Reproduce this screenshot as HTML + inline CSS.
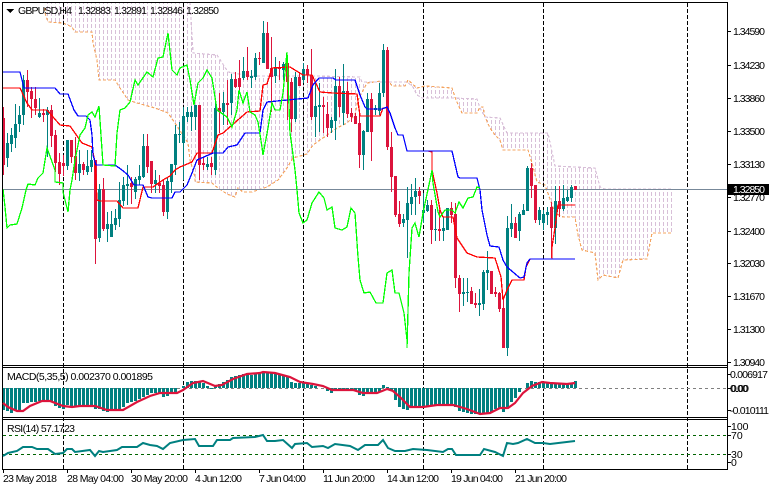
<!DOCTYPE html>
<html><head><meta charset="utf-8"><title>GBPUSD,H4</title>
<style>
html,body{margin:0;padding:0;background:#fff;width:769px;height:490px;overflow:hidden}
svg{display:block}
text{font-family:"Liberation Sans",sans-serif;font-size:10.5px;fill:#000}
</style></head><body>
<svg width="769" height="490" viewBox="0 0 769 490" xmlns="http://www.w3.org/2000/svg">
<defs>
<pattern id="h" width="4" height="6" patternUnits="userSpaceOnUse"><rect x="3" y="0" width="1" height="4" fill="#D8BFD8"/></pattern>
<clipPath id="cp"><rect x="3" y="3" width="724" height="362"/></clipPath>
</defs>
<rect width="769" height="490" fill="#fff"/>
<g shape-rendering="crispEdges">
<!-- cloud -->
<g clip-path="url(#cp)">
<polygon fill="url(#h)" points="45,2 190,2 193,53 217,55 228,72 250,76 313,76 360,77 362,82 407,82 413,87 417,95 422,98 453,98 477,99 480,108 485,117 500,118 507,133 548,133 552,152 555,166 595,168 600,187 605,189 672,189 672,233 652,233 647,259 623,260 618,278 603,275 598,280 595,253 582,250 578,235 575,217 563,217 555,213 545,185 537,182 532,163 528,150 503,150 500,140 495,135 490,128 485,117 483,107 480,107 477,113 462,113 456,100 452,88 425,86 417,88 408,80 405,86 392,86 388,80 367,83 358,100 355,115 347,123 337,128 313,145 307,154 293,158 287,168 278,180 267,187 250,191 243,192 238,188 235,197 227,194 218,188 212,183 195,182 195,177 190,160 188,143 175,123 168,113 155,108 137,103 128,100 120,88 115,80 99,80 97,60 93,43 92,32 75,32 72,27 63,23 48,22 45,13"/>
<polyline fill="none" stroke="#F4A460" stroke-width="1.2" stroke-dasharray="3 2" points="45,8 45,13 48,22 63,23 72,27 75,32 92,32 93,43 97,60 99,80 115,80 120,88 128,100 137,103 155,108 168,113 175,123 188,143 190,160 195,177 195,182 212,183 218,188 227,194 235,197 238,188 243,192 252,192 267,187 278,180 287,168 293,158 307,154 313,145 337,128 347,123 355,115 358,100 367,83 388,80 392,86 405,86 408,80 417,88 425,86 452,88 456,100 462,113 477,113 480,107 483,107 485,117 490,128 495,135 500,140 503,150 528,150 532,163 537,182 545,185 555,213 563,217 575,217 578,235 582,250 595,253 598,280 603,275 618,278 623,260 647,259 652,233 672,233"/>
<polyline fill="none" stroke="#D8BFD8" stroke-width="1.2" stroke-dasharray="3 2" points="190,2 193,53 217,55 228,72 250,76 313,76 360,77 362,82 407,82 413,87 417,95 422,98 453,98 477,99 480,108 485,117 500,118 507,133 548,133 552,152 555,166 595,168 600,187 605,189 672,189"/>
</g>
<!-- grid -->
<path d="M63.5 3V469M183.5 3V469M303.5 3V469M423.5 3V469M543.5 3V469M687.5 3V469" stroke="#000" stroke-dasharray="4 2" fill="none"/>
<path d="M3 189.5H727" stroke="#778899" fill="none"/>
<path d="M3 388.5H727" stroke="#808080" stroke-dasharray="3 3" fill="none"/>
<path d="M3 435.5H727M3 454.5H727" stroke="#006400" stroke-dasharray="3 3" fill="none"/>
<!-- candles -->
<g transform="translate(.5 0)" fill="none">
<path stroke="#008080" d="M7 133V167M11 128V152M15 104V148M19 106V132M23 75V125M39 98V118M47 107V157M67 140V170M79 150V181M87 150V175M91 150V172M99 184V242M107 212V242M111 211V237M115 209V230M119 182V227M123 177V206M127 165V205M135 177V199M139 165V185M143 134V178M155 170V193M167 177V219M171 164V193M175 125V175M179 122V143M183 107V180M187 107V122M191 106V131M195 105V130M207 157V170M215 100V175M223 92V125M231 74V115M243 57V80M251 70V88M255 53V80M263 21V63M275 57V83M283 62V80M295 72V122M303 63V83M315 83V137M319 83V132M331 117V133M335 69V140M343 64V125M363 130V170M367 93V132M375 105V115M379 83V115M383 44V97M403 214V227M407 187V258M411 184V215M415 178V215M423 193V223M427 200V212M435 209V241M443 217V241M447 208V230M463 278V306M467 278V302M479 289V316M483 270V310M487 251V290M507 216V356M511 204V237M519 212V241M523 204V215M527 166V211M539 207V225M543 210V230M547 207V225M555 186V244M563 185V211M567 190V202M571 185V202"/>
<path stroke="#008080" stroke-width="3" d="M7 143V158M11 135V144M15 124V138M19 115V124M23 80V115M39 113V117M47 110V115M67 140V166M79 164V173M87 166V172M91 160V167M99 189V238M107 224V229M111 224V237M115 218V225M119 200V219M123 185V201M127 184V186M135 179V192M139 176V180M143 146V177M155 180V184M167 181V212M171 164V182M175 134V165M179 134V135M183 116V143M187 112V117M191 112V117M195 105V117M207 164V167M215 108V170M223 103V112M231 79V103M243 71V78M251 76V78M255 58V77M263 33V63M275 68V76M283 64V70M295 77V119M303 69V80M315 106V117M319 105V107M331 120V128M335 86V121M343 91V113M363 131V155M367 99V132M375 108V110M379 93V111M383 50V93M403 219V223M407 203V220M411 197V204M415 191V197M423 210V213M427 205V211M435 229V230M443 228V231M447 208V230M463 292V294M467 292V293M479 303V305M483 272V304M487 270V273M507 228V348M511 223V229M519 214V231M523 210V215M527 168V211M539 210V220M543 214V223M547 212V215M555 201V228M563 198V209M567 197V201M571 187V198"/>
<path stroke="#DC143C" d="M3 107V175M27 70V107M31 87V118M35 87V115M43 109V122M51 105V147M55 130V172M59 153V185M63 155V176M71 140V163M75 137V180M83 162V175M95 160V264M103 178V231M131 177V204M147 134V173M151 161V193M159 175V193M163 180V216M199 105V180M203 157V170M211 157V175M219 93V133M227 80V125M235 72V88M239 60V90M247 47V80M259 52V65M267 22V69M271 37V112M279 61V80M287 60V120M291 78V132M299 72V86M307 65V83M311 49V120M323 97V133M327 102V137M339 77V117M347 82V118M351 108V122M355 113V124M359 112V168M371 93V161M387 47V150M391 132V192M395 176V217M399 201V227M419 187V204M431 200V244M439 210V241M451 202V223M455 203V288M459 275V312M471 287V304M475 293V308M491 271V294M495 287V297M499 292V312M503 300V348M515 217V238M531 163V198M535 185V223M551 202V258M559 186V217"/>
<path stroke="#DC143C" stroke-width="3" d="M3 118V165M27 80V92M31 91V99M35 99V108M43 113V115M51 110V136M55 135V163M59 162V174M63 163V166M71 140V157M75 156V173M83 164V170M95 160V239M103 189V229M131 183V187M147 146V167M151 161V184M159 183V186M163 185V212M199 105V165M203 163V165M211 163V167M219 108V112M227 103V105M235 79V87M239 78V87M247 71V77M259 58V59M267 33V69M271 68V77M279 68V69M287 63V82M291 82V119M299 77V86M307 69V75M311 75V117M323 105V107M327 114V128M339 86V107M347 91V114M351 113V117M355 116V124M359 123V155M371 99V132M387 50V147M391 147V177M395 176V215M399 214V224M419 191V196M431 205V230M439 229V231M451 208V215M455 214V278M459 278V294M471 291V304M475 303V305M491 271V294M495 292V294M499 293V309M503 308V348M515 223V238M531 168V186M535 185V220M551 207V228M559 201V209M575 186V190"/>
</g>
<!-- ichimoku lines -->
<g fill="none" clip-path="url(#cp)" stroke-width="1.3">
<polyline stroke="#FF0000" points="3,88 20,88 27,103 32,110 47,110 60,125 70,126 82,143 92,147 95,163 97,200 100,201 117,201 123,208 138,208 143,187 153,187 163,180 170,176 175,170 180,167 192,162 197,153 212,153 218,135 223,133 247,112 260,111 263,85 267,84 272,68 290,67 303,75 312,75 320,92 333,93 357,94 360,116 380,116 383,108 388,108"/>
<polyline stroke="#FF0000" points="428,151 432,152 432,170 437,193 440,210 443,217 453,217 457,238 467,253 477,257 495,258 501,277 503,300 507,290 512,280 524,280 526,267 530,259 552,259 552,247 555,228 558,205 575,205"/>
<polyline stroke="#0000FF" points="3,72 20,72 22,80 24,88 55,88 60,94 68,94 74,110 78,116 86,116 90,120 92,135 93,155 96,165 115,165 122,170 128,175 134,185 143,185 148,197 152,198 172,198 175,192 180,192 187,185 192,173 197,160 213,153 223,153 228,147 237,145 245,133 260,133 263,110 267,102 308,98 313,85 319,78 333,78 336,80 355,80 360,95 365,107 367,109 382,109 387,107 390,113 395,128 398,135 403,135 407,151 452,151 458,177 460,178 477,178 480,190 482,210 487,235 490,246 499,247 503,260 507,267 520,278 524,277 527,263 530,259 575,259"/>
<polyline stroke="#00FF00" points="3,189 5,207 7,228 10,225 17,224 22,208 26,190 28,184 35,185 38,178 43,173 47,148 55,170 55,182 63,183 63,192 68,212 70,190 72,180 75,160 80,135 85,128 88,115 92,112 95,117 99,106 102,150 103,165 115,166 117,133 120,110 125,108 130,102 135,80 138,85 147,72 153,77 158,58 163,57 168,33 172,70 177,75 180,68 187,65 190,80 194,105 198,83 203,78 207,70 212,78 217,110 227,117 232,127 237,110 239,90 243,103 247,92 250,112 255,115 258,122 262,147 263,155 268,128 272,103 275,110 280,110 283,93 287,52 290,133 292,147 295,170 297,190 299,213 303,223 307,220 312,203 319,192 324,198 327,210 332,207 335,228 342,230 347,227 351,208 355,213 358,257 360,280 364,293 370,292 376,303 383,303 387,273 392,270 395,293 399,293 404,313 407,340 407,348 409,273 412,228 415,223 419,237 423,213 430,180 432,170 433,183 438,212 440,217 445,210 452,210 455,213 459,202 463,208 468,198 473,197 477,187 480,188"/>
</g>
<!-- MACD -->
<path fill="none" transform="translate(.5 0)" stroke="#008080" stroke-width="3" d="M3 388V410M7 388V411M11 388V413M15 388V411M19 388V410M23 388V403M27 388V403M31 388V402M35 388V402M39 388V401M43 388V401M47 388V400M51 388V402M55 388V406M59 388V408M63 388V409M67 388V405M71 388V406M75 388V406M79 388V406M83 388V406M87 388V406M91 388V406M95 388V409M99 388V409M103 388V411M107 388V412M111 388V411M115 388V410M119 388V410M123 388V407M127 388V403M131 388V402M135 388V401M139 388V399M143 388V397M147 388V395M151 388V393M155 388V393M159 388V394M163 388V397M167 388V396M171 388V393M175 388V392M183 388V386M187 388V382M191 388V381M195 388V381M199 388V381M203 388V383M207 388V386M211 388V389M215 388V385M219 388V384M223 388V382M227 388V380M231 388V377M235 388V376M239 388V375M243 388V374M247 388V373M251 388V375M255 388V374M259 388V373M263 388V373M267 388V373M271 388V373M275 388V374M279 388V375M283 388V376M287 388V377M291 388V382M295 388V383M299 388V383M303 388V383M307 388V383M311 388V385M315 388V386M327 388V391M331 388V393M335 388V389M339 388V389M343 388V390M347 388V390M351 388V389M355 388V391M359 388V395M363 388V396M367 388V393M371 388V392M375 388V392M379 388V392M383 388V385M387 388V387M391 388V390M395 388V400M399 388V407M403 388V409M407 388V410M411 388V408M415 388V407M419 388V407M423 388V407M427 388V407M431 388V405M435 388V405M439 388V405M443 388V405M447 388V405M451 388V405M455 388V407M459 388V411M463 388V412M467 388V413M471 388V414M475 388V414M479 388V414M483 388V413M487 388V413M491 388V412M495 388V409M499 388V408M503 388V412M507 388V408M511 388V402M515 388V398M519 388V392M527 388V383M531 388V381M535 388V382M539 388V382M543 388V382M547 388V383M551 388V383M555 388V384M559 388V384M563 388V384M567 388V384M571 388V383M575 388V381"/>
<!-- frames -->
<path fill="none" stroke="#000" d="M2.5 2V470M2 2.5H727M2 365.5H727M2 367.5H727M2 417.5H727M2 419.5H727M2 469.5H727M727.5 2V470"/>
<path fill="none" stroke="#000" d="M727 31.5h4M727 65.5h4M727 98.5h4M727 131.5h4M727 164.5h4M727 197.5h4M727 231.5h4M727 263.5h4M727 296.5h4M727 329.5h4M727 362.5h4M727 374.5h4M727 388.5h4M727 410.5h4M727 426.5h4M727 435.5h4M727 454.5h4M727 462.5h4M3.5 469v4M67.5 469v4M131.5 469v4M195.5 469v4M259.5 469v4M323.5 469v4M387.5 469v4M451.5 469v4M515.5 469v4"/>
<rect x="728" y="184" width="41" height="11" fill="#000"/>
<polygon points="6,9 14,9 10,13" fill="#000"/>
</g>
<polyline fill="none" stroke="#DC143C" stroke-width="2.2" points="3,403 8,407 17,411 23,411 30,406 42,401 50,401 63,406 72,407 80,406 95,406 107,410 123,410 137,402 150,396 160,393 177,393 183,390 193,383 203,381 215,386 222,385 233,379 247,374 260,373 263,372 275,373 290,377 300,382 313,384 323,386 332,390 353,390 363,393 377,393 387,389 393,391 400,397 410,407 423,407 437,405 453,405 467,409 480,414 490,413 500,408 508,408 515,403 523,393 532,386 542,382 550,383 567,384 575,383"/>
<polyline fill="none" stroke="#008080" stroke-width="2" points="3,456 8,453 17,451 23,447 32,447 37,449 48,449 55,454 63,453 67,449 72,449 75,452 90,450 95,456 99,451 103,452 117,450 122,447 137,447 143,443 150,445 157,446 163,449 170,443 183,440 195,439 199,446 213,446 217,440 230,440 233,438 255,437 263,435 267,441 275,441 283,440 292,448 295,444 307,443 312,447 323,446 328,448 335,444 350,446 358,450 365,445 378,445 383,440 388,448 395,451 405,451 413,449 427,450 443,452 448,449 452,449 456,455 480,455 484,449 495,452 503,456 507,443 513,444 518,443 527,439 535,443 543,443 550,444 575,441"/>
<!-- text -->
<text x="18" y="14" textLength="54" lengthAdjust="spacing">GBPUSD,H4</text>
<text x="78" y="14" textLength="33" lengthAdjust="spacing">1.32883</text>
<text x="114" y="14" textLength="33" lengthAdjust="spacing">1.32891</text>
<text x="150" y="14" textLength="33" lengthAdjust="spacing">1.32846</text>
<text x="186" y="14" textLength="33" lengthAdjust="spacing">1.32850</text>
<text x="7" y="380" textLength="146" lengthAdjust="spacing">MACD(5,35,5) 0.002370 0.001895</text>
<text x="7" y="432" textLength="68" lengthAdjust="spacing">RSI(14) 57.1723</text>
<g>
<text x="733" y="35" textLength="32" lengthAdjust="spacing">1.34590</text>
<text x="733" y="69" textLength="32" lengthAdjust="spacing">1.34230</text>
<text x="733" y="102" textLength="32" lengthAdjust="spacing">1.33860</text>
<text x="733" y="135" textLength="32" lengthAdjust="spacing">1.33500</text>
<text x="733" y="168" textLength="32" lengthAdjust="spacing">1.33130</text>
<text x="733" y="201" textLength="32" lengthAdjust="spacing">1.32770</text>
<text x="733" y="235" textLength="32" lengthAdjust="spacing">1.32400</text>
<text x="733" y="267" textLength="32" lengthAdjust="spacing">1.32030</text>
<text x="733" y="300" textLength="32" lengthAdjust="spacing">1.31670</text>
<text x="733" y="333" textLength="32" lengthAdjust="spacing">1.31300</text>
<text x="733" y="366" textLength="32" lengthAdjust="spacing">1.30940</text>
<text x="733" y="193" textLength="32" lengthAdjust="spacing" style="fill:#fff">1.32850</text>
<text x="730" y="378" textLength="38" lengthAdjust="spacing">0.006917</text>
<text x="730" y="392" textLength="18" lengthAdjust="spacing">0.00</text>
<text x="731" y="392" textLength="18" lengthAdjust="spacing">0.00</text>
<text x="730" y="414" textLength="39" lengthAdjust="spacing">-0.010111</text>
<text x="731" y="430">100</text>
<text x="731" y="439">70</text>
<text x="731" y="458">30</text>
<text x="731" y="466">0</text>
<text x="3" y="482" textLength="54" lengthAdjust="spacing">23 May 2018</text>
<text x="67" y="482" textLength="57" lengthAdjust="spacing">28 May 04:00</text>
<text x="131" y="482" textLength="57" lengthAdjust="spacing">30 May 20:00</text>
<text x="195" y="482" textLength="47" lengthAdjust="spacing">4 Jun 12:00</text>
<text x="259" y="482" textLength="47" lengthAdjust="spacing">7 Jun 04:00</text>
<text x="323" y="482" textLength="52" lengthAdjust="spacing">11 Jun 20:00</text>
<text x="387" y="482" textLength="52" lengthAdjust="spacing">14 Jun 12:00</text>
<text x="451" y="482" textLength="52" lengthAdjust="spacing">19 Jun 04:00</text>
<text x="515" y="482" textLength="52" lengthAdjust="spacing">21 Jun 20:00</text>
</g>
</svg>
</body></html>
